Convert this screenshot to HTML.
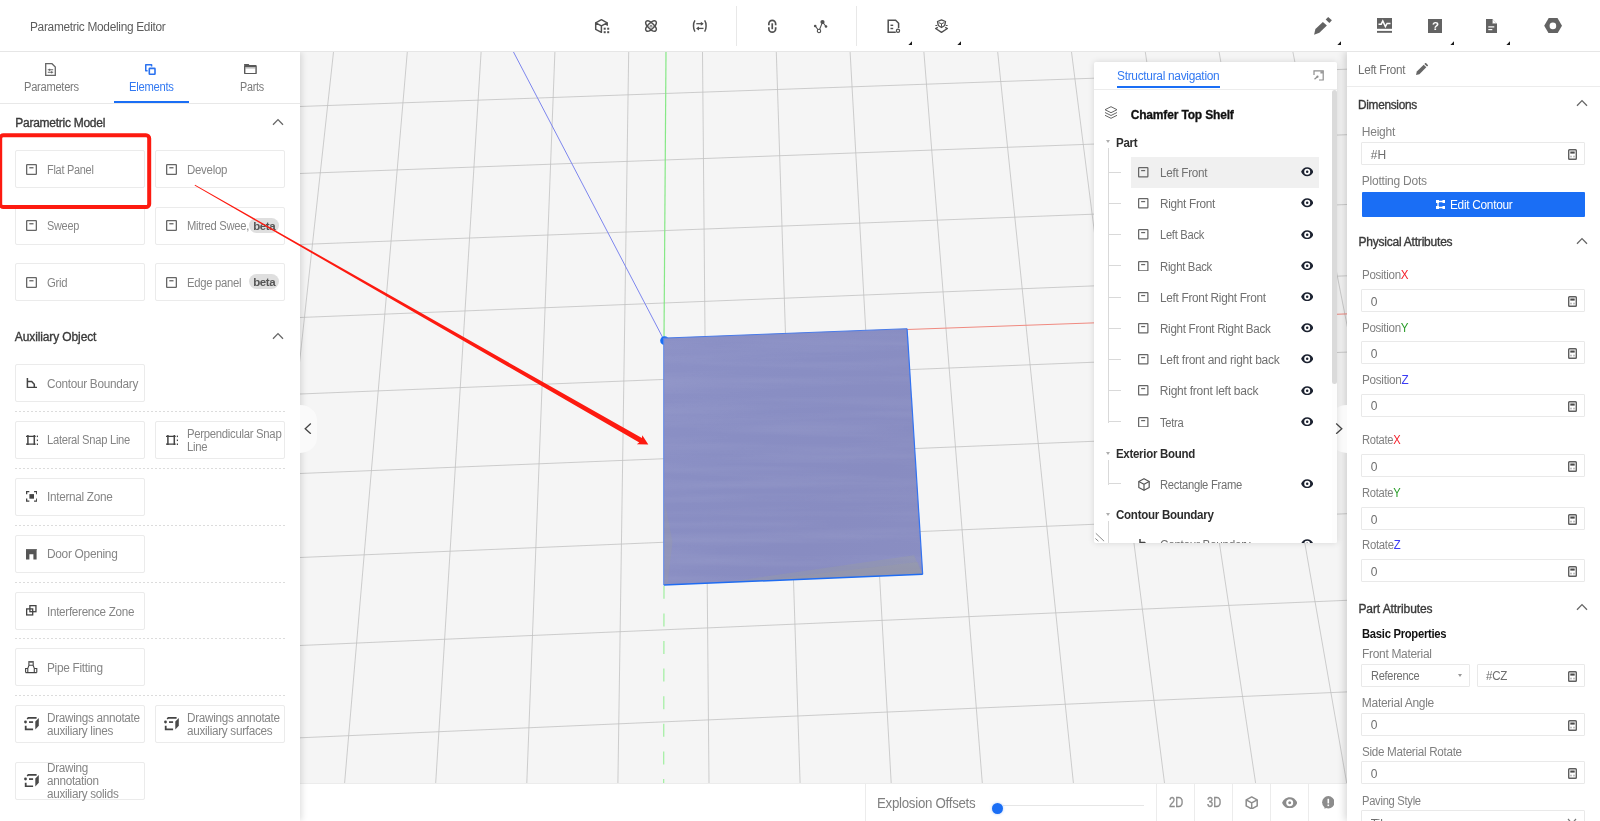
<!DOCTYPE html><html lang="en"><head><meta charset="utf-8"><title>Parametric Modeling Editor</title><style>
*{box-sizing:border-box;margin:0;padding:0}
html,body{width:1600px;height:821px;overflow:hidden;background:#fff}
body{font-family:"Liberation Sans",sans-serif;font-size:12px;color:#666;position:relative}
.abs{position:absolute}
.t{position:absolute;white-space:nowrap;line-height:14px;height:14px}
.sb{-webkit-text-stroke:.35px currentColor}
#top,#left,#right,#nav,#bottom{will-change:transform}
#top{position:absolute;left:0;top:0;width:1600px;height:52px;background:#fff;border-bottom:1px solid #e6e6e6;z-index:8}
#left{position:absolute;left:0;top:52px;width:300px;height:769px;background:#fff;z-index:4;box-shadow:2px 0 6px rgba(0,0,0,.12)}
#canvas{position:absolute;left:300px;top:52px;width:1047px;height:731px;background:#f5f5f5;overflow:hidden;z-index:1}
#right{position:absolute;left:1347px;top:52px;width:253px;height:769px;background:#fff;z-index:4;box-shadow:-2px 0 8px rgba(0,0,0,.17);overflow:hidden}
#bottom{position:absolute;left:300px;top:783px;width:1047px;height:38px;background:#fff;z-index:2;border-top:1px solid #ececec}
#nav{position:absolute;left:1094px;top:62px;width:243px;height:481px;background:#fff;z-index:6;overflow:hidden;box-shadow:0 0 6px rgba(0,0,0,.13);border-radius:2px}
.card{position:absolute;width:130px;height:38px;border:1px solid #ebebeb;border-radius:2px;background:#fff}
.card .lbl{position:absolute;left:31px;line-height:13px;color:#858585;white-space:nowrap}
.card svg{position:absolute}
.dash{position:absolute;left:15px;width:270px;height:1px;background:repeating-linear-gradient(90deg,#dcdcdc 0,#dcdcdc 2px,transparent 2px,transparent 4px)}
.inp{position:absolute;left:14.4px;width:223.8px;height:23px;border:1px solid #e9e9e9;border-radius:1px;background:#fff}
.inp .v{position:absolute;left:8.3px;top:4.7px;line-height:14px;height:14px;color:#6e6e6e;white-space:nowrap}
.inp svg{position:absolute;right:7px;top:6px}
.lab{position:absolute;left:15px;color:#808080;white-space:nowrap;line-height:14px;height:14px}
.hd{position:absolute;left:11px;color:#3a3a3a;white-space:nowrap;line-height:14px;height:14px}
.row{position:absolute;left:37px;width:188px;height:31px}
.row .rt{position:absolute;left:28.8px;top:9px;line-height:14px;height:14px;color:#707070;white-space:nowrap}
.row svg.ri{position:absolute;left:7.2px;top:10.1px}
.row svg.eye{position:absolute;left:170.1px;top:10.3px}
.grp{position:absolute;left:22.4px;color:#2c2c2c;line-height:14px;height:14px;white-space:nowrap}
.tri{position:absolute;width:0;height:0;border-left:2.4px solid transparent;border-right:2.4px solid transparent;border-top:3.6px solid #adadad}
.hl{position:absolute;left:14px;width:13px;height:0;border-top:1px solid #d9d9d9}
</style></head><body>
<div id="top">
<div class="t" style="left:30.2px;top:20px;color:#5c5c5c;letter-spacing:-0.3px;transform:scaleX(0.9895);transform-origin:0 50%;">Parametric Modeling Editor</div>
<div class="abs" style="left:736px;top:6px;width:1px;height:40px;background:#e8e8e8"></div>
<div class="abs" style="left:856px;top:6px;width:1px;height:40px;background:#e8e8e8"></div>
<svg class="abs" style="left:594px;top:19px" width="17" height="15" viewBox="0 0 17 15"><path d="M7.4 .7L13.2 3.8V6.3M7.4 .7L1.7 3.8V10.3L7.4 13.3V6.8L1.7 3.8M7.4 6.8L13.2 3.8" fill="none" stroke="#505050" stroke-width="1.5" stroke-linejoin="round" stroke-linecap="round"/><g fill="#505050"><rect x="9.7" y="8.7" width="2" height="2"/><rect x="13.2" y="8.7" width="2" height="2"/><rect x="9.7" y="12.2" width="2" height="2"/><rect x="13.2" y="12.2" width="2" height="2"/></g></svg>
<svg class="abs" style="left:644.1px;top:19px" width="14" height="14" viewBox="0 0 14 14"><g fill="none" stroke="#505050" stroke-width="1.5"><ellipse cx="7" cy="7" rx="6.7" ry="2.9" transform="rotate(45 7 7)"/><ellipse cx="7" cy="7" rx="6.7" ry="2.9" transform="rotate(-45 7 7)"/></g><circle cx="7" cy="7.2" r="1" fill="none" stroke="#505050" stroke-width=".8"/></svg>
<svg class="abs" style="left:692px;top:20px" width="16" height="12" viewBox="0 0 16 12"><g fill="none" stroke="#505050" stroke-width="1.5"><path d="M3 .4C1 3 1 9 3 11.6"/><path d="M12.6 .4C14.6 3 14.6 9 12.6 11.6"/><path d="M4.3 3.7h6.5" stroke-width="1.3"/><path d="M5 8.4h6.5" stroke-width="1.3"/></g><path d="M8.8 1.7l2.9 2L8.8 5.7z" fill="#505050"/><path d="M7 6.4L4 8.4 7 10.4z" fill="#505050"/></svg>
<svg class="abs" style="left:766.5px;top:19px" width="10.5" height="14.5" viewBox="0 0 10.5 14.5"><g fill="none" stroke="#505050" stroke-width="1.7"><path d="M1.85 6.3V4.75a3.4 3.4 0 016.8 0V6.3"/><path d="M1.85 8.2V9.75a3.4 3.4 0 006.8 0V8.2"/><path d="M5.25 4.3v5.9"/></g></svg>
<svg class="abs" style="left:813px;top:19px" width="15" height="15" viewBox="0 0 15 15"><g stroke="#505050" stroke-width="1.1" fill="none"><path d="M2.2 7L6 12L9.5 3L13 7.5"/><circle cx="6" cy="12" r="1.7" fill="#fff"/></g><circle cx="9.5" cy="3" r="2.1" fill="#505050"/><circle cx="2.2" cy="7" r="1.3" fill="#505050"/><circle cx="13" cy="7.5" r="1.3" fill="#505050"/></svg>
<svg class="abs" style="left:886.5px;top:19px" width="14" height="15" viewBox="0 0 14 15"><g fill="none" stroke="#505050" stroke-width="1.5"><path d="M11.6 9V4.2L8.6 1.2H1.2V13.3H8.8"/><circle cx="11" cy="11.7" r="1.6" stroke-width="1.2"/></g><rect x="3.5" y="5.6" width="2.7" height="1.4" fill="#505050"/><rect x="3.5" y="8.8" width="2.7" height="1.4" fill="#505050"/></svg>
<svg class="abs" style="left:934px;top:19px" width="15" height="15" viewBox="0 0 15 15"><g fill="none" stroke="#505050" stroke-width="1.3" stroke-linejoin="round"><path d="M7.5 .8L11.5 2.5L10.7 6.5L7.5 8.5L4.3 6.5L3.5 2.5z"/><path d="M4.8 3.6L7.5 4.8L10.2 3.6M7.5 4.8V7.8" stroke-width="1"/><path d="M3.8 8.3L1.6 9.5L7.5 13.3L13.4 9.5L11.2 8.3" stroke-width="1.4"/></g><path d="M1.4 6.5h1.6M12 6.5h1.6" stroke="#505050" stroke-width="1.1"/></svg>
<svg class="abs" style="left:908px;top:41px" width="4" height="4" viewBox="0 0 4 4"><path d="M4 .3V3.9H.4z" fill="#1a1a1a"/></svg>
<svg class="abs" style="left:956.9px;top:41px" width="4" height="4" viewBox="0 0 4 4"><path d="M4 .3V3.9H.4z" fill="#1a1a1a"/></svg>
<svg class="abs" style="left:1337.3px;top:41px" width="4" height="4" viewBox="0 0 4 4"><path d="M4 .3V3.9H.4z" fill="#1a1a1a"/></svg>
<svg class="abs" style="left:1449.9px;top:41px" width="4" height="4" viewBox="0 0 4 4"><path d="M4 .3V3.9H.4z" fill="#1a1a1a"/></svg>
<svg class="abs" style="left:1506.2px;top:41px" width="4" height="4" viewBox="0 0 4 4"><path d="M4 .3V3.9H.4z" fill="#1a1a1a"/></svg>
<svg class="abs" style="left:1313px;top:16px" width="20" height="20" viewBox="0 0 20 20"><path d="M1.1 18.7L2.4 13.1L9.9 5.9L13.9 9.6L6.4 16.8z" fill="#636363"/><path d="M12.7 3.4L15.2 .9L18.9 4.3L16.4 7.1z" fill="#636363"/></svg>
<svg class="abs" style="left:1377px;top:18px" width="15" height="15" viewBox="0 0 15 15"><rect x="0" y="0" width="15" height="10.8" fill="#636363"/><path d="M1.5 6.2h2.7l1.6-3.3 2.6 5.6 1.7-3.1h3.4" fill="none" stroke="#fff" stroke-width="1.5"/><rect x="0" y="12.9" width="15" height="1.9" fill="#636363"/></svg>
<svg class="abs" style="left:1427.5px;top:18.7px" width="14.8" height="14.1" viewBox="0 0 14.8 14.1"><rect x="0" y="0" width="14.8" height="14.1" fill="#636363"/><text x="7.4" y="11.3" font-family="Liberation Sans, sans-serif" font-weight="700" font-size="11.5" fill="#fff" text-anchor="middle">?</text></svg>
<svg class="abs" style="left:1485.9px;top:18.7px" width="11" height="14.1" viewBox="0 0 11 14.1"><path d="M0 0h6.3L11 4.7V14.1H0z" fill="#636363"/><path d="M6.3 0v4.7H11z" fill="#fff"/><path d="M6.3 0v4.7H11" fill="none" stroke="#636363" stroke-width=".5"/><rect x="2.3" y="7.3" width="6" height="1.2" fill="#fff"/><rect x="2.3" y="10" width="4" height="1.2" fill="#fff"/></svg>
<svg class="abs" style="left:1543.5px;top:18px" width="18.2" height="15.4" viewBox="0 0 18.2 15.4"><path d="M4.7 0h8.8l4.5 7.7-4.5 7.7H4.7L.2 7.7z" fill="#636363"/><circle cx="8.9" cy="7.9" r="3.3" fill="#fff"/></svg>
</div>
<div id="left">
<div class="abs" style="left:0;top:51px;width:300px;height:1px;background:#e8e8e8"></div>
<div class="abs" style="left:114px;top:49px;width:75px;height:2px;background:#1a6ef5"></div>
<div class="t" style="left:23.9px;top:28px;color:#7a7a7a;letter-spacing:-0.3px;transform:scaleX(0.9284);transform-origin:0 50%;">Parameters</div>
<div class="t" style="left:129.4px;top:28px;color:#3279f2;letter-spacing:-0.3px;transform:scaleX(0.9365);transform-origin:0 50%;">Elements</div>
<div class="t" style="left:239.6px;top:28px;color:#7a7a7a;letter-spacing:-0.3px;transform:scaleX(0.8978);transform-origin:0 50%;">Parts</div>
<svg class="abs" style="left:45px;top:11px" width="11" height="13" viewBox="0 0 11 13"><path d="M.7.7h6.3l3.3 3.3v8.3H.7z" fill="none" stroke="#666" stroke-width="1.3"/><path d="M2.8 6.8h5.4M2.8 9.3h5.4" stroke="#666" stroke-width="1.1"/><rect x="4" y="5.8" width="1.2" height="2" fill="#666"/><rect x="6" y="8.3" width="1.2" height="2" fill="#666"/></svg>
<svg class="abs" style="left:145.1px;top:11.8px" width="10.8" height="11" viewBox="0 0 10.8 11"><path d="M6.6 2.6V.75H.75V6.8H2.6" fill="none" stroke="#2a72f0" stroke-width="1.5" stroke-linejoin="round"/><rect x="4.3" y="4.4" width="5.7" height="5.8" rx=".5" fill="none" stroke="#2a72f0" stroke-width="1.6"/></svg>
<svg class="abs" style="left:244.3px;top:11.8px" width="12.8" height="10.4" viewBox="0 0 12.8 10.4"><rect x="1.4" y="2.6" width="10" height="2" fill="#bdbdbd"/><path d="M.7 1.8V.6H4.4L5.2 1.8" fill="none" stroke="#595959" stroke-width="1.2"/><rect x=".7" y="1.8" width="11.4" height="7.9" rx=".6" fill="none" stroke="#595959" stroke-width="1.4"/><path d="M.7 2.3H12.1" stroke="#595959" stroke-width="1.4"/></svg>
<div class="t sb" style="left:15.3px;top:64px;color:#3a3a3a;letter-spacing:-0.265px;">Parametric Model</div>
<svg class="abs" style="left:272px;top:66px" width="12" height="8" viewBox="0 0 12 8"><path d="M1 6.8L6 1.6L11 6.8" fill="none" stroke="#666" stroke-width="1.3"/></svg>
<div class="t sb" style="left:14.8px;top:278px;color:#3a3a3a;letter-spacing:-0.116px;">Auxiliary Object</div>
<svg class="abs" style="left:272px;top:280px" width="12" height="8" viewBox="0 0 12 8"><path d="M1 6.8L6 1.6L11 6.8" fill="none" stroke="#666" stroke-width="1.3"/></svg>
<div class="card" style="left:15px;top:98.3px"><svg style="left:10.2px;top:12.6px"  width="11" height="11" viewBox="0 0 11 11"><rect x="0.65" y="0.65" width="9.7" height="9.7" rx="0.6" fill="none" stroke="#666" stroke-width="1.3"/><rect x="3.3" y="3.1" width="4.2" height="1.3" fill="#666"/></svg><div class="lbl" style="top:12.7px;letter-spacing:-0.3px;transform:scaleX(0.9132);transform-origin:0 50%;">Flat Panel</div></div>
<div class="card" style="left:155px;top:98.3px"><svg style="left:10.2px;top:12.6px"  width="11" height="11" viewBox="0 0 11 11"><rect x="0.65" y="0.65" width="9.7" height="9.7" rx="0.6" fill="none" stroke="#666" stroke-width="1.3"/><rect x="3.3" y="3.1" width="4.2" height="1.3" fill="#666"/></svg><div class="lbl" style="top:12.7px;letter-spacing:-0.3px;transform:scaleX(0.9564);transform-origin:0 50%;">Develop</div></div>
<div class="card" style="left:15px;top:154.7px"><svg style="left:10.2px;top:12.6px"  width="11" height="11" viewBox="0 0 11 11"><rect x="0.65" y="0.65" width="9.7" height="9.7" rx="0.6" fill="none" stroke="#666" stroke-width="1.3"/><rect x="3.3" y="3.1" width="4.2" height="1.3" fill="#666"/></svg><div class="lbl" style="top:12.3px;letter-spacing:-0.3px;transform:scaleX(0.9093);transform-origin:0 50%;">Sweep</div></div>
<div class="card" style="left:155px;top:154.7px"><svg style="left:10.2px;top:12.6px"  width="11" height="11" viewBox="0 0 11 11"><rect x="0.65" y="0.65" width="9.7" height="9.7" rx="0.6" fill="none" stroke="#666" stroke-width="1.3"/><rect x="3.3" y="3.1" width="4.2" height="1.3" fill="#666"/></svg><div class="lbl" style="top:12.3px;letter-spacing:-0.3px;transform:scaleX(0.9333);transform-origin:0 50%;">Mitred Swee,</div><span class="abs" style="left:93.4px;top:10.2px;width:29.7px;height:15.2px;line-height:16.4px;text-align:center;border-radius:7.6px;background:#dfdfdf;color:#555;font-weight:700;font-size:11.5px;letter-spacing:-.45px">beta</span></div>
<div class="card" style="left:15px;top:211px"><svg style="left:10.2px;top:12.6px"  width="11" height="11" viewBox="0 0 11 11"><rect x="0.65" y="0.65" width="9.7" height="9.7" rx="0.6" fill="none" stroke="#666" stroke-width="1.3"/><rect x="3.3" y="3.1" width="4.2" height="1.3" fill="#666"/></svg><div class="lbl" style="top:13px;letter-spacing:-0.3px;transform:scaleX(0.9455);transform-origin:0 50%;">Grid</div></div>
<div class="card" style="left:155px;top:211px"><svg style="left:10.2px;top:12.6px"  width="11" height="11" viewBox="0 0 11 11"><rect x="0.65" y="0.65" width="9.7" height="9.7" rx="0.6" fill="none" stroke="#666" stroke-width="1.3"/><rect x="3.3" y="3.1" width="4.2" height="1.3" fill="#666"/></svg><div class="lbl" style="top:13px;letter-spacing:-0.3px;transform:scaleX(0.939);transform-origin:0 50%;">Edge panel</div><span class="abs" style="left:93.4px;top:10.2px;width:29.7px;height:15.2px;line-height:16.4px;text-align:center;border-radius:7.6px;background:#dfdfdf;color:#555;font-weight:700;font-size:11.5px;letter-spacing:-.45px">beta</span></div>
<div class="card" style="left:15px;top:311.8px"><svg style="left:9.7px;top:13.2px" width="11" height="10.5" viewBox="0 0 11 10.5"><path d="M1.4 0v9.4h9.6M1.4 3.4h4.3l2.6 2.9v3.1" fill="none" stroke="#444" stroke-width="1.5"/></svg><div class="lbl" style="top:13.2px;letter-spacing:-0.3px;transform:scaleX(0.9827);transform-origin:0 50%;">Contour Boundary</div></div>
<div class="dash" style="top:359.1px"></div>
<div class="card" style="left:15px;top:368.7px"><svg style="left:9.5px;top:13px" width="12.4" height="10.6" viewBox="0 0 12.4 10.6"><g stroke="#444" fill="none"><path d="M1.9 0v10.6M8.3 0v10.6" stroke-width="1.5"/><path d="M0 1.4h9.7M0 9.2h9.7" stroke-width="1.2"/></g><g fill="#444"><rect x="10.8" y=".6" width="1.5" height="1.5"/><rect x="10.8" y="4.55" width="1.5" height="1.5"/><rect x="10.8" y="8.5" width="1.5" height="1.5"/></g></svg><div class="lbl" style="top:12.3px;letter-spacing:-0.3px;transform:scaleX(0.9328);transform-origin:0 50%;">Lateral Snap Line</div></div>
<div class="card" style="left:155px;top:368.7px"><svg style="left:9.9px;top:13px" width="12.4" height="10.6" viewBox="0 0 12.4 10.6"><g stroke="#444" fill="none"><path d="M1.9 0v10.6M8.3 0v10.6" stroke-width="1.5"/><path d="M0 1.4h9.7M0 9.2h9.7" stroke-width="1.2"/></g><g fill="#444"><rect x="10.8" y=".6" width="1.5" height="1.5"/><rect x="10.8" y="4.55" width="1.5" height="1.5"/><rect x="10.8" y="8.5" width="1.5" height="1.5"/></g></svg><div class="lbl" style="top:6.3px;letter-spacing:-0.3px;transform:scaleX(0.9439);transform-origin:0 50%;">Perpendicular Snap<br>Line</div></div>
<div class="dash" style="top:415.8px"></div>
<div class="card" style="left:15px;top:425.6px"><svg style="left:9.8px;top:12.7px" width="11.4" height="10.8" viewBox="0 0 11.4 10.8"><g stroke="#444" stroke-width="1.3" fill="none"><path d="M.65 3.2V.65h2.7M8.05.65h2.7v2.55M10.75 7.6v2.55h-2.7M3.35 10.15H.65V7.6"/></g><rect x="3.4" y="3.1" width="4.6" height="4.6" fill="#444"/></svg><div class="lbl" style="top:12.4px;letter-spacing:-0.3px;transform:scaleX(0.9804);transform-origin:0 50%;">Internal Zone</div></div>
<div class="dash" style="top:472.7px"></div>
<div class="card" style="left:15px;top:482.6px"><svg style="left:10.2px;top:13.5px" width="10.6" height="10.6" viewBox="0 0 10.6 10.6"><path d="M0 0h10.6v10.6H7.4V5.3H3.4v5.3H0z" fill="#555"/><rect x="0" y="0" width="10.6" height="1.2" fill="#6a6a6a"/></svg><div class="lbl" style="top:12.4px;letter-spacing:-0.3px;transform:scaleX(0.9914);transform-origin:0 50%;">Door Opening</div></div>
<div class="dash" style="top:529.5px"></div>
<div class="card" style="left:15px;top:539.9px"><svg style="left:10.2px;top:12.6px" width="10.6" height="10.6" viewBox="0 0 10.6 10.6"><g stroke="#444" stroke-width="1.3" fill="none"><rect x="3.9" y=".65" width="6.05" height="6.05"/><rect x=".65" y="3.9" width="6.05" height="6.05"/></g></svg><div class="lbl" style="top:13.1px;letter-spacing:-0.3px;transform:scaleX(0.9729);transform-origin:0 50%;">Interference Zone</div></div>
<div class="dash" style="top:586.3px"></div>
<div class="card" style="left:15px;top:596.3px"><svg style="left:9.4px;top:12px" width="12.4" height="12.4" viewBox="0 0 12.4 12.4"><g stroke="#444" stroke-width="1.1" fill="none"><path d="M3.3 .9H8.8" stroke-width="1.5"/><path d="M3.9 1.6V4.3H8.2V1.6M3.9 4.5L2.8 7.4M8.2 4.5L9.3 7.4M2.8 7.4V11.6M9.3 7.4V11.6M.6 11.6H11.8M2.8 7.5H.6V11.6M9.3 7.5H11.8V11.6"/></g></svg><div class="lbl" style="top:12.7px;letter-spacing:-0.3px;transform:scaleX(0.987);transform-origin:0 50%;">Pipe Fitting</div></div>
<div class="dash" style="top:643.2px"></div>
<div class="card" style="left:15px;top:653.2px"><svg style="left:8px;top:11.3px" width="15" height="13.4" viewBox="0 0 15 13.4"><g stroke="#444" fill="none"><path d="M3.2 2L4.3 .9H12.6" stroke-width="1.6"/><path d="M5 5.1H9.1" stroke-width="1.7"/><path d="M1.7 8.8V12.4H9.1" stroke-width="1.8"/></g><circle cx="1.5" cy="5" r="1.4" fill="#444"/><path d="M11.3 4.4L14.8 .9V8.8L11.3 12.4z" fill="#4a4a4a"/></svg><div class="lbl" style="top:5.8px;letter-spacing:-0.3px;transform:scaleX(0.9772);transform-origin:0 50%;">Drawings annotate<br>auxiliary lines</div></div>
<div class="card" style="left:155px;top:653.2px"><svg style="left:8px;top:11.3px" width="15" height="13.4" viewBox="0 0 15 13.4"><g stroke="#444" fill="none"><path d="M3.2 2L4.3 .9H12.6" stroke-width="1.6"/><path d="M5 5.1H9.1" stroke-width="1.7"/><path d="M1.7 8.8V12.4H9.1" stroke-width="1.8"/></g><circle cx="1.5" cy="5" r="1.4" fill="#444"/><path d="M11.3 4.4L14.8 .9V8.8L11.3 12.4z" fill="#4a4a4a"/></svg><div class="lbl" style="top:5.8px;letter-spacing:-0.3px;transform:scaleX(0.9772);transform-origin:0 50%;">Drawings annotate<br>auxiliary surfaces</div></div>
<div class="card" style="left:15px;top:709.7px"><svg style="left:8px;top:11.3px" width="15" height="13.4" viewBox="0 0 15 13.4"><g stroke="#444" fill="none"><path d="M3.2 2L4.3 .9H12.6" stroke-width="1.6"/><path d="M5 5.1H9.1" stroke-width="1.7"/><path d="M1.7 8.8V12.4H9.1" stroke-width="1.8"/></g><circle cx="1.5" cy="5" r="1.4" fill="#444"/><path d="M11.3 4.4L14.8 .9V8.8L11.3 12.4z" fill="#4a4a4a"/></svg><div class="lbl" style="top:-0.7px;letter-spacing:-0.3px;transform:scaleX(0.9757);transform-origin:0 50%;">Drawing<br>annotation<br>auxiliary solids</div></div>
</div>
<div id="canvas"><svg width="1047" height="731" viewBox="300 52 1047 731" style="position:absolute;left:0;top:0">
<g stroke="#c2c2c2" stroke-width=".8" fill="none">
<line x1="259.7" y1="52" x2="162.4" y2="783"/>
<line x1="333.5" y1="52" x2="253.5" y2="783"/>
<line x1="407.3" y1="52" x2="344.6" y2="783"/>
<line x1="481.1" y1="52" x2="435.7" y2="783"/>
<line x1="554.9" y1="52" x2="526.8" y2="783"/>
<line x1="628.7" y1="52" x2="617.9" y2="783"/>
<line x1="702.5" y1="52" x2="709" y2="783"/>
<line x1="776.3" y1="52" x2="800.1" y2="783"/>
<line x1="850.1" y1="52" x2="891.2" y2="783"/>
<line x1="923.9" y1="52" x2="982.3" y2="783"/>
<line x1="997.7" y1="52" x2="1073.4" y2="783"/>
<line x1="1071.5" y1="52" x2="1164.5" y2="783"/>
<line x1="1145.3" y1="52" x2="1255.6" y2="783"/>
<line x1="1219.1" y1="52" x2="1346.7" y2="783"/>
<line x1="1292.9" y1="52" x2="1437.8" y2="783"/>
<line x1="1366.7" y1="52" x2="1528.9" y2="783"/>
<line x1="300" y1="106.5" x2="1347" y2="69.2"/>
<line x1="300" y1="173.5" x2="1347" y2="134.7"/>
<line x1="300" y1="244.5" x2="1347" y2="204.5"/>
<line x1="300" y1="317.5" x2="1347" y2="275.8"/>
<line x1="300" y1="394" x2="1347" y2="352.1"/>
<line x1="300" y1="473.5" x2="1347" y2="431"/>
<line x1="300" y1="557.5" x2="1347" y2="513.7"/>
<line x1="300" y1="645.5" x2="1347" y2="600.3"/>
<line x1="300" y1="737.8" x2="1347" y2="691.9"/>
</g>
<line x1="513.5" y1="52" x2="664" y2="340" stroke="#7d86ee" stroke-width="1"/>
<line x1="666" y1="52" x2="664" y2="340" stroke="#86e886" stroke-width="1.2"/>
<line x1="664" y1="585.8" x2="663.7" y2="783" stroke="#98ee98" stroke-width="1.1" stroke-dasharray="13 14.6"/>
<line x1="907" y1="329.5" x2="1347" y2="313.9" stroke="#f08a80" stroke-width="1"/>
<defs><linearGradient id="wood" x1="0" y1="0" x2="1" y2="1"><stop offset="0" stop-color="#8c91c6"/><stop offset=".35" stop-color="#898ec3"/><stop offset=".7" stop-color="#888cc1"/><stop offset="1" stop-color="#8a8ec2"/></linearGradient>
<filter id="grain" x="0" y="0" width="100%" height="100%"><feTurbulence type="fractalNoise" baseFrequency="0.004 0.09" numOctaves="3" seed="7" result="n"/><feColorMatrix in="n" type="matrix" values="0 0 0 0 0.5  0 0 0 0 0.52  0 0 0 0 0.72  0.9 0 0 0 -0.33"/><feComposite in2="SourceGraphic" operator="in"/></filter></defs>
<circle cx="664.6" cy="340.7" r="4.4" fill="#1a6ef5"/>
<path d="M663.8 338.1L907.1 328.7L922.7 574.3L663.8 585z" fill="url(#wood)"/>
<path d="M663.8 338.1L907.1 328.7L922.7 574.3L663.8 585z" fill="#fff" filter="url(#grain)" opacity=".32"/>
<path d="M721 583L914 555.3L922.5 574.3z" fill="#a5a78f" opacity=".24"/>
<path d="M760 580.5L918 562L922.5 574.3z" fill="#a5a78f" opacity=".18"/>
<path d="M664 497L672.5 542L667.5 584.5L664 585z" fill="#a5a78f" opacity=".2"/>
<path d="M907.1 328.7L922.7 574.3" fill="none" stroke="#3273f2" stroke-width="1.2"/>
<path d="M922.7 574.3L663.8 585" fill="none" stroke="#1f6cf2" stroke-width="1.5"/>
<path d="M663.8 338.1L907.1 328.7" fill="none" stroke="#4a7be8" stroke-width="1"/>
<path d="M663.7 338.1V585" fill="none" stroke="#5f8aea" stroke-width="1"/>
</svg>
</div>
<div class="abs" style="left:300px;top:404.5px;width:16.8px;height:48px;background:#fafafa;border-radius:0 17px 17px 0/0 15px 15px 0;z-index:5"></div>
<svg class="abs" style="left:303.7px;top:422.6px;z-index:6" width="8" height="11.4" viewBox="0 0 8 11.4"><path d="M6.8 .6L1.2 5.7l5.6 5.1" fill="none" stroke="#444" stroke-width="1.3"/></svg>
<div class="abs" style="left:1330.2px;top:404.5px;width:16.8px;height:48px;background:#fafafa;border-radius:17px 0 0 17px/15px 0 0 15px;z-index:5"></div>
<div id="nav">
<div class="abs" style="left:0;top:27px;width:243px;height:1px;background:#ececec"></div>
<div class="t" style="left:23px;top:6.5px;color:#3279f2;letter-spacing:-0.3px;transform:scaleX(0.9932);transform-origin:0 50%;">Structural navigation</div>
<div class="abs" style="left:23px;top:24.2px;width:102.5px;height:2px;background:#1a6ef5"></div>
<svg class="abs" style="left:219px;top:7.5px" width="11.5" height="11.5" viewBox="0 0 11.5 11.5"><g fill="none" stroke="#8e8e8e" stroke-width="1.2"><path d="M1 5V.9H10.2V10H6"/><path d="M1.5 9.2L4.4 6.8" stroke-width="1.3"/></g><rect x="7.4" y="1.2" width="2.8" height="2.3" fill="#9a9a9a"/><circle cx="4.5" cy="6.7" r="1.1" fill="#8e8e8e"/></svg>
<div class="abs" style="left:238.3px;top:28px;width:4.7px;height:453px;background:#fdfdfd"></div>
<div class="abs" style="left:238.3px;top:28px;width:4.7px;height:293.5px;background:#dadada;border-radius:3px"></div>
<svg class="abs" style="left:10px;top:44px" width="14" height="13" viewBox="0 0 14 13"><g fill="none" stroke="#666" stroke-width="1" stroke-linejoin="round"><path d="M7 .7L13 3.7 7 6.7 1 3.7z"/><path d="M1 6.5l6 3 6-3"/><path d="M1 9.3l6 3 6-3"/></g></svg>
<div class="t" style="left:36.7px;top:45.5px;color:#111;font-weight:700;letter-spacing:-0.164px;-webkit-text-stroke:.3px #111;">Chamfer Top Shelf</div>
<div class="abs" style="left:14px;top:86px;width:1px;height:275px;background:#d9d9d9"></div>
<div class="abs" style="left:14px;top:397.5px;width:1px;height:25.5px;background:#d9d9d9"></div>
<div class="abs" style="left:14px;top:458.5px;width:1px;height:30px;background:#d9d9d9"></div>
<div class="tri" style="left:12.4px;top:78.3px"></div>
<div class="t" style="left:22.4px;top:73.5px;color:#2c2c2c;font-weight:700;letter-spacing:-0.3px;transform:scaleX(0.9619);transform-origin:0 50%;">Part</div>
<div class="hl" style="top:109.8px"></div>
<div class="row" style="top:95px;background:#f0f0f0;"><svg class="ri" width="10.5" height="10.5" viewBox="0 0 11 11"><rect x="0.65" y="0.65" width="9.7" height="9.7" rx="0.6" fill="none" stroke="#666" stroke-width="1.3"/><rect x="3.3" y="3.1" width="4.2" height="1.3" fill="#666"/></svg><div class="rt" style="letter-spacing:-0.3px;transform:scaleX(0.9761);transform-origin:0 50%;">Left Front</div><svg class="eye" width="12.4" height="9.4" viewBox="0 0 12.4 9.4"><path d="M6.2 .2C3.4 .2 1.1 2 .1 4.7c1 2.7 3.3 4.5 6.1 4.5s5.1-1.8 6.1-4.5C11.3 2 9 .2 6.2 .2z" fill="#1c2230"/><circle cx="6.2" cy="4.7" r="3" fill="#fff"/><circle cx="6.2" cy="4.7" r="1.25" fill="#1c2230"/></svg></div>
<div class="hl" style="top:141px"></div>
<div class="row" style="top:126.2px;"><svg class="ri" width="10.5" height="10.5" viewBox="0 0 11 11"><rect x="0.65" y="0.65" width="9.7" height="9.7" rx="0.6" fill="none" stroke="#666" stroke-width="1.3"/><rect x="3.3" y="3.1" width="4.2" height="1.3" fill="#666"/></svg><div class="rt" style="letter-spacing:-0.3px;transform:scaleX(0.9829);transform-origin:0 50%;">Right Front</div><svg class="eye" width="12.4" height="9.4" viewBox="0 0 12.4 9.4"><path d="M6.2 .2C3.4 .2 1.1 2 .1 4.7c1 2.7 3.3 4.5 6.1 4.5s5.1-1.8 6.1-4.5C11.3 2 9 .2 6.2 .2z" fill="#1c2230"/><circle cx="6.2" cy="4.7" r="3" fill="#fff"/><circle cx="6.2" cy="4.7" r="1.25" fill="#1c2230"/></svg></div>
<div class="hl" style="top:172.2px"></div>
<div class="row" style="top:157.4px;"><svg class="ri" width="10.5" height="10.5" viewBox="0 0 11 11"><rect x="0.65" y="0.65" width="9.7" height="9.7" rx="0.6" fill="none" stroke="#666" stroke-width="1.3"/><rect x="3.3" y="3.1" width="4.2" height="1.3" fill="#666"/></svg><div class="rt" style="letter-spacing:-0.3px;transform:scaleX(0.9297);transform-origin:0 50%;">Left Back</div><svg class="eye" width="12.4" height="9.4" viewBox="0 0 12.4 9.4"><path d="M6.2 .2C3.4 .2 1.1 2 .1 4.7c1 2.7 3.3 4.5 6.1 4.5s5.1-1.8 6.1-4.5C11.3 2 9 .2 6.2 .2z" fill="#1c2230"/><circle cx="6.2" cy="4.7" r="3" fill="#fff"/><circle cx="6.2" cy="4.7" r="1.25" fill="#1c2230"/></svg></div>
<div class="hl" style="top:203.4px"></div>
<div class="row" style="top:188.6px;"><svg class="ri" width="10.5" height="10.5" viewBox="0 0 11 11"><rect x="0.65" y="0.65" width="9.7" height="9.7" rx="0.6" fill="none" stroke="#666" stroke-width="1.3"/><rect x="3.3" y="3.1" width="4.2" height="1.3" fill="#666"/></svg><div class="rt" style="letter-spacing:-0.3px;transform:scaleX(0.9432);transform-origin:0 50%;">Right Back</div><svg class="eye" width="12.4" height="9.4" viewBox="0 0 12.4 9.4"><path d="M6.2 .2C3.4 .2 1.1 2 .1 4.7c1 2.7 3.3 4.5 6.1 4.5s5.1-1.8 6.1-4.5C11.3 2 9 .2 6.2 .2z" fill="#1c2230"/><circle cx="6.2" cy="4.7" r="3" fill="#fff"/><circle cx="6.2" cy="4.7" r="1.25" fill="#1c2230"/></svg></div>
<div class="hl" style="top:234.6px"></div>
<div class="row" style="top:219.8px;"><svg class="ri" width="10.5" height="10.5" viewBox="0 0 11 11"><rect x="0.65" y="0.65" width="9.7" height="9.7" rx="0.6" fill="none" stroke="#666" stroke-width="1.3"/><rect x="3.3" y="3.1" width="4.2" height="1.3" fill="#666"/></svg><div class="rt" style="letter-spacing:-0.3px;transform:scaleX(0.9847);transform-origin:0 50%;">Left Front Right Front</div><svg class="eye" width="12.4" height="9.4" viewBox="0 0 12.4 9.4"><path d="M6.2 .2C3.4 .2 1.1 2 .1 4.7c1 2.7 3.3 4.5 6.1 4.5s5.1-1.8 6.1-4.5C11.3 2 9 .2 6.2 .2z" fill="#1c2230"/><circle cx="6.2" cy="4.7" r="3" fill="#fff"/><circle cx="6.2" cy="4.7" r="1.25" fill="#1c2230"/></svg></div>
<div class="hl" style="top:265.8px"></div>
<div class="row" style="top:251px;"><svg class="ri" width="10.5" height="10.5" viewBox="0 0 11 11"><rect x="0.65" y="0.65" width="9.7" height="9.7" rx="0.6" fill="none" stroke="#666" stroke-width="1.3"/><rect x="3.3" y="3.1" width="4.2" height="1.3" fill="#666"/></svg><div class="rt" style="letter-spacing:-0.3px;transform:scaleX(0.9683);transform-origin:0 50%;">Right Front Right Back</div><svg class="eye" width="12.4" height="9.4" viewBox="0 0 12.4 9.4"><path d="M6.2 .2C3.4 .2 1.1 2 .1 4.7c1 2.7 3.3 4.5 6.1 4.5s5.1-1.8 6.1-4.5C11.3 2 9 .2 6.2 .2z" fill="#1c2230"/><circle cx="6.2" cy="4.7" r="3" fill="#fff"/><circle cx="6.2" cy="4.7" r="1.25" fill="#1c2230"/></svg></div>
<div class="hl" style="top:297px"></div>
<div class="row" style="top:282.2px;"><svg class="ri" width="10.5" height="10.5" viewBox="0 0 11 11"><rect x="0.65" y="0.65" width="9.7" height="9.7" rx="0.6" fill="none" stroke="#666" stroke-width="1.3"/><rect x="3.3" y="3.1" width="4.2" height="1.3" fill="#666"/></svg><div class="rt" style="letter-spacing:-0.255px;">Left front and right back</div><svg class="eye" width="12.4" height="9.4" viewBox="0 0 12.4 9.4"><path d="M6.2 .2C3.4 .2 1.1 2 .1 4.7c1 2.7 3.3 4.5 6.1 4.5s5.1-1.8 6.1-4.5C11.3 2 9 .2 6.2 .2z" fill="#1c2230"/><circle cx="6.2" cy="4.7" r="3" fill="#fff"/><circle cx="6.2" cy="4.7" r="1.25" fill="#1c2230"/></svg></div>
<div class="hl" style="top:328.2px"></div>
<div class="row" style="top:313.4px;"><svg class="ri" width="10.5" height="10.5" viewBox="0 0 11 11"><rect x="0.65" y="0.65" width="9.7" height="9.7" rx="0.6" fill="none" stroke="#666" stroke-width="1.3"/><rect x="3.3" y="3.1" width="4.2" height="1.3" fill="#666"/></svg><div class="rt" style="letter-spacing:-0.233px;">Right front left back</div><svg class="eye" width="12.4" height="9.4" viewBox="0 0 12.4 9.4"><path d="M6.2 .2C3.4 .2 1.1 2 .1 4.7c1 2.7 3.3 4.5 6.1 4.5s5.1-1.8 6.1-4.5C11.3 2 9 .2 6.2 .2z" fill="#1c2230"/><circle cx="6.2" cy="4.7" r="3" fill="#fff"/><circle cx="6.2" cy="4.7" r="1.25" fill="#1c2230"/></svg></div>
<div class="hl" style="top:359.4px"></div>
<div class="row" style="top:344.6px;"><svg class="ri" width="10.5" height="10.5" viewBox="0 0 11 11"><rect x="0.65" y="0.65" width="9.7" height="9.7" rx="0.6" fill="none" stroke="#666" stroke-width="1.3"/><rect x="3.3" y="3.1" width="4.2" height="1.3" fill="#666"/></svg><div class="rt" style="letter-spacing:-0.3px;transform:scaleX(0.9294);transform-origin:0 50%;">Tetra</div><svg class="eye" width="12.4" height="9.4" viewBox="0 0 12.4 9.4"><path d="M6.2 .2C3.4 .2 1.1 2 .1 4.7c1 2.7 3.3 4.5 6.1 4.5s5.1-1.8 6.1-4.5C11.3 2 9 .2 6.2 .2z" fill="#1c2230"/><circle cx="6.2" cy="4.7" r="3" fill="#fff"/><circle cx="6.2" cy="4.7" r="1.25" fill="#1c2230"/></svg></div>
<div class="tri" style="left:12.4px;top:389.8px"></div>
<div class="t" style="left:22.4px;top:384.5px;color:#2c2c2c;font-weight:700;letter-spacing:-0.3px;transform:scaleX(0.9567);transform-origin:0 50%;">Exterior Bound</div>
<div class="hl" style="top:421.3px"></div>
<div class="row" style="top:406.5px"><svg class="ri" width="12" height="13" viewBox="0 0 12 13" style="top:9px"><g fill="none" stroke="#555" stroke-width="1.2" stroke-linejoin="round"><path d="M6 .7l5.2 2.8v6L6 12.3.8 9.5v-6z"/><path d="M.8 3.5L6 6.3l5.2-2.8M6 6.3v6"/></g></svg><div class="rt" style="letter-spacing:-0.3px;transform:scaleX(0.9367);transform-origin:0 50%;">Rectangle Frame</div><svg class="eye" width="12.4" height="9.4" viewBox="0 0 12.4 9.4"><path d="M6.2 .2C3.4 .2 1.1 2 .1 4.7c1 2.7 3.3 4.5 6.1 4.5s5.1-1.8 6.1-4.5C11.3 2 9 .2 6.2 .2z" fill="#1c2230"/><circle cx="6.2" cy="4.7" r="3" fill="#fff"/><circle cx="6.2" cy="4.7" r="1.25" fill="#1c2230"/></svg></div>
<div class="tri" style="left:12.4px;top:450.8px"></div>
<div class="t" style="left:22.4px;top:445.5px;color:#2c2c2c;font-weight:700;letter-spacing:-0.3px;transform:scaleX(0.9645);transform-origin:0 50%;">Contour Boundary</div>
<div class="hl" style="top:482px"></div>
<div class="row" style="top:467px"><svg class="ri" width="13" height="12" viewBox="0 0 13 12"><path d="M2 0v9.5h10.5M2 3.5h4.5l3 3.2v2.8" fill="none" stroke="#444" stroke-width="1.5"/></svg><div class="rt" style="letter-spacing:-0.3px;transform:scaleX(0.9763);transform-origin:0 50%;">Contour Boundary</div><svg class="eye" width="12.4" height="9.4" viewBox="0 0 12.4 9.4"><path d="M6.2 .2C3.4 .2 1.1 2 .1 4.7c1 2.7 3.3 4.5 6.1 4.5s5.1-1.8 6.1-4.5C11.3 2 9 .2 6.2 .2z" fill="#1c2230"/><circle cx="6.2" cy="4.7" r="3" fill="#fff"/><circle cx="6.2" cy="4.7" r="1.25" fill="#1c2230"/></svg></div>
<svg class="abs" style="left:1px;top:469.5px" width="10" height="10" viewBox="0 0 10 10"><path d="M.8 1.3L9.1 9.2M.4 6.5L3.4 9.2" stroke="#8a8a8a" stroke-width="1"/></svg>
</div>
<svg class="abs" style="left:1335.3px;top:422.6px;z-index:7" width="8" height="11.4" viewBox="0 0 8 11.4"><path d="M1.2 .6L6.8 5.7l-5.6 5.1" fill="none" stroke="#444" stroke-width="1.3"/></svg>
<div id="right">
<div class="t" style="left:11.4px;top:11px;color:#707070;letter-spacing:-0.3px;transform:scaleX(0.974);transform-origin:0 50%;">Left Front</div>
<svg class="abs" style="left:69px;top:11px" width="12" height="12" viewBox="0 0 12 12"><path d="M0 12l.8-3.4L7.7 1.7l2.6 2.6L3.4 11.2z" fill="#666"/><path d="M8.4 1l.9-.9a.5.5 0 01.7 0l1.9 1.9a.5.5 0 010 .7l-.9.9z" fill="#666"/></svg>
<div class="abs" style="left:0;top:34px;width:253px;height:1px;background:#ececec"></div>
<div class="t sb" style="left:11.4px;top:46px;color:#3a3a3a;letter-spacing:-0.3px;transform:scaleX(0.9867);transform-origin:0 50%;">Dimensions</div>
<svg class="abs" style="left:229px;top:47px" width="12" height="8" viewBox="0 0 12 8"><path d="M1 6.8L6 1.6L11 6.8" fill="none" stroke="#666" stroke-width="1.3"/></svg>
<div class="t" style="left:14.8px;top:73px;color:#808080;letter-spacing:-0.231px;">Height</div>
<div class="inp" style="left:14.4px;top:90.3px;width:223.8px"><div class="v" style="letter-spacing:0.23px;">#H</div><svg width="9" height="11" viewBox="0 0 9 11"><rect x="0.7" y="0.7" width="7.6" height="9.6" rx="0.8" fill="none" stroke="#5e5e5e" stroke-width="1.4"/><rect x="2.3" y="2.5" width="4.4" height="2.1" fill="#4a4a4a"/><rect x="2.3" y="6.7" width="1.4" height="1.7" fill="#a8a8a8"/><rect x="5.3" y="6.7" width="1.4" height="1.7" fill="#a8a8a8"/></svg></div>
<div class="t" style="left:14.8px;top:122px;color:#808080;letter-spacing:-0.233px;">Plotting Dots</div>
<div class="abs" style="left:15px;top:139.5px;width:223px;height:25.5px;background:#1a6ef5;border-radius:1px"></div>
<svg class="abs" style="left:89px;top:148px" width="9" height="9" viewBox="0 0 9 9"><path d="M2 1.5h5M2 7.5h5M2 1.5v6" stroke="#fff" stroke-width="1.3" fill="none"/><rect x="0" y="0" width="3" height="3" fill="#fff"/><rect x="0" y="6" width="3" height="3" fill="#fff"/><rect x="6.5" y="0" width="2.5" height="3" fill="#fff"/><rect x="6.5" y="6" width="2.5" height="3" fill="#fff"/></svg>
<div class="t" style="left:102.9px;top:145.5px;color:#fff;letter-spacing:-0.3px;transform:scaleX(0.9888);transform-origin:0 50%;">Edit Contour</div>
<div class="t sb" style="left:11.4px;top:183px;color:#3a3a3a;letter-spacing:-0.213px;">Physical Attributes</div>
<svg class="abs" style="left:229px;top:185px" width="12" height="8" viewBox="0 0 12 8"><path d="M1 6.8L6 1.6L11 6.8" fill="none" stroke="#666" stroke-width="1.3"/></svg>
<div class="lab" style="left:14.8px;top:216px;letter-spacing:-0.3px;transform:scaleX(0.9646);transform-origin:0 50%;">Position<span style="color:#f5222d">X</span></div>
<div class="inp" style="left:14.4px;top:237.3px;width:223.8px"><div class="v" style="">0</div><svg width="9" height="11" viewBox="0 0 9 11"><rect x="0.7" y="0.7" width="7.6" height="9.6" rx="0.8" fill="none" stroke="#5e5e5e" stroke-width="1.4"/><rect x="2.3" y="2.5" width="4.4" height="2.1" fill="#4a4a4a"/><rect x="2.3" y="6.7" width="1.4" height="1.7" fill="#a8a8a8"/><rect x="5.3" y="6.7" width="1.4" height="1.7" fill="#a8a8a8"/></svg></div>
<div class="lab" style="left:14.8px;top:269px;letter-spacing:-0.3px;transform:scaleX(0.9646);transform-origin:0 50%;">Position<span style="color:#2a9d2a">Y</span></div>
<div class="inp" style="left:14.4px;top:289.3px;width:223.8px"><div class="v" style="">0</div><svg width="9" height="11" viewBox="0 0 9 11"><rect x="0.7" y="0.7" width="7.6" height="9.6" rx="0.8" fill="none" stroke="#5e5e5e" stroke-width="1.4"/><rect x="2.3" y="2.5" width="4.4" height="2.1" fill="#4a4a4a"/><rect x="2.3" y="6.7" width="1.4" height="1.7" fill="#a8a8a8"/><rect x="5.3" y="6.7" width="1.4" height="1.7" fill="#a8a8a8"/></svg></div>
<div class="lab" style="left:14.8px;top:321px;letter-spacing:-0.3px;transform:scaleX(0.9784);transform-origin:0 50%;">Position<span style="color:#3b3bf5">Z</span></div>
<div class="inp" style="left:14.4px;top:341.8px;width:223.8px"><div class="v" style="">0</div><svg width="9" height="11" viewBox="0 0 9 11"><rect x="0.7" y="0.7" width="7.6" height="9.6" rx="0.8" fill="none" stroke="#5e5e5e" stroke-width="1.4"/><rect x="2.3" y="2.5" width="4.4" height="2.1" fill="#4a4a4a"/><rect x="2.3" y="6.7" width="1.4" height="1.7" fill="#a8a8a8"/><rect x="5.3" y="6.7" width="1.4" height="1.7" fill="#a8a8a8"/></svg></div>
<div class="lab" style="left:14.8px;top:381px;letter-spacing:-0.3px;transform:scaleX(0.9307);transform-origin:0 50%;">Rotate<span style="color:#f5222d">X</span></div>
<div class="inp" style="left:14.4px;top:402px;width:223.8px"><div class="v" style="">0</div><svg width="9" height="11" viewBox="0 0 9 11"><rect x="0.7" y="0.7" width="7.6" height="9.6" rx="0.8" fill="none" stroke="#5e5e5e" stroke-width="1.4"/><rect x="2.3" y="2.5" width="4.4" height="2.1" fill="#4a4a4a"/><rect x="2.3" y="6.7" width="1.4" height="1.7" fill="#a8a8a8"/><rect x="5.3" y="6.7" width="1.4" height="1.7" fill="#a8a8a8"/></svg></div>
<div class="lab" style="left:14.8px;top:433.5px;letter-spacing:-0.3px;transform:scaleX(0.9307);transform-origin:0 50%;">Rotate<span style="color:#2a9d2a">Y</span></div>
<div class="inp" style="left:14.4px;top:454.9px;width:223.8px"><div class="v" style="">0</div><svg width="9" height="11" viewBox="0 0 9 11"><rect x="0.7" y="0.7" width="7.6" height="9.6" rx="0.8" fill="none" stroke="#5e5e5e" stroke-width="1.4"/><rect x="2.3" y="2.5" width="4.4" height="2.1" fill="#4a4a4a"/><rect x="2.3" y="6.7" width="1.4" height="1.7" fill="#a8a8a8"/><rect x="5.3" y="6.7" width="1.4" height="1.7" fill="#a8a8a8"/></svg></div>
<div class="lab" style="left:14.8px;top:486px;letter-spacing:-0.3px;transform:scaleX(0.9461);transform-origin:0 50%;">Rotate<span style="color:#3b3bf5">Z</span></div>
<div class="inp" style="left:14.4px;top:507px;width:223.8px"><div class="v" style="">0</div><svg width="9" height="11" viewBox="0 0 9 11"><rect x="0.7" y="0.7" width="7.6" height="9.6" rx="0.8" fill="none" stroke="#5e5e5e" stroke-width="1.4"/><rect x="2.3" y="2.5" width="4.4" height="2.1" fill="#4a4a4a"/><rect x="2.3" y="6.7" width="1.4" height="1.7" fill="#a8a8a8"/><rect x="5.3" y="6.7" width="1.4" height="1.7" fill="#a8a8a8"/></svg></div>
<div class="t sb" style="left:11.4px;top:550px;color:#3a3a3a;letter-spacing:-0.085px;">Part Attributes</div>
<svg class="abs" style="left:229px;top:551px" width="12" height="8" viewBox="0 0 12 8"><path d="M1 6.8L6 1.6L11 6.8" fill="none" stroke="#666" stroke-width="1.3"/></svg>
<div class="t" style="left:14.9px;top:575px;color:#111;font-weight:700;letter-spacing:-0.3px;transform:scaleX(0.9376);transform-origin:0 50%;">Basic Properties</div>
<div class="t" style="left:14.8px;top:595px;color:#808080;letter-spacing:-0.3px;transform:scaleX(0.9968);transform-origin:0 50%;">Front Material</div>
<div class="inp" style="top:611.8px;width:108.5px"><div class="v" style="letter-spacing:-0.3px;transform:scaleX(0.9171);transform-origin:0 50%;">Reference</div></div>
<div class="tri" style="left:111px;top:621.5px;border-top-color:#999;border-left-width:2.5px;border-right-width:2.5px;border-top-width:3.5px"></div>
<div class="inp" style="left:129.7px;top:611.8px;width:108.5px"><div class="v" style="letter-spacing:-0.3px;transform:scaleX(0.9646);transform-origin:0 50%;">#CZ</div><svg width="9" height="11" viewBox="0 0 9 11"><rect x="0.7" y="0.7" width="7.6" height="9.6" rx="0.8" fill="none" stroke="#5e5e5e" stroke-width="1.4"/><rect x="2.3" y="2.5" width="4.4" height="2.1" fill="#4a4a4a"/><rect x="2.3" y="6.7" width="1.4" height="1.7" fill="#a8a8a8"/><rect x="5.3" y="6.7" width="1.4" height="1.7" fill="#a8a8a8"/></svg></div>
<div class="t" style="left:14.8px;top:644px;color:#808080;letter-spacing:-0.275px;">Material Angle</div>
<div class="inp" style="left:14.4px;top:660.7px;width:223.8px"><div class="v" style="">0</div><svg width="9" height="11" viewBox="0 0 9 11"><rect x="0.7" y="0.7" width="7.6" height="9.6" rx="0.8" fill="none" stroke="#5e5e5e" stroke-width="1.4"/><rect x="2.3" y="2.5" width="4.4" height="2.1" fill="#4a4a4a"/><rect x="2.3" y="6.7" width="1.4" height="1.7" fill="#a8a8a8"/><rect x="5.3" y="6.7" width="1.4" height="1.7" fill="#a8a8a8"/></svg></div>
<div class="t" style="left:14.8px;top:693px;color:#808080;letter-spacing:-0.3px;transform:scaleX(0.9715);transform-origin:0 50%;">Side Material Rotate</div>
<div class="inp" style="left:14.4px;top:709.3px;width:223.8px"><div class="v" style="">0</div><svg width="9" height="11" viewBox="0 0 9 11"><rect x="0.7" y="0.7" width="7.6" height="9.6" rx="0.8" fill="none" stroke="#5e5e5e" stroke-width="1.4"/><rect x="2.3" y="2.5" width="4.4" height="2.1" fill="#4a4a4a"/><rect x="2.3" y="6.7" width="1.4" height="1.7" fill="#a8a8a8"/><rect x="5.3" y="6.7" width="1.4" height="1.7" fill="#a8a8a8"/></svg></div>
<div class="t" style="left:14.8px;top:742px;color:#808080;letter-spacing:-0.3px;transform:scaleX(0.9318);transform-origin:0 50%;">Paving Style</div>
<div class="inp" style="top:758.2px"><div class="v" style="top:5.5px">Tile</div><svg width="10" height="7" viewBox="0 0 10 7" style="top:7.3px"><path d="M1 1l4 4.5L9 1" fill="none" stroke="#777" stroke-width="1.2"/></svg></div>
</div>
<div id="bottom">
<div class="abs" style="left:565px;top:0;width:1px;height:38px;background:#ececec"></div>
<div class="abs" style="left:856.1px;top:0;width:1px;height:38px;background:#ececec"></div>
<div class="abs" style="left:894.1px;top:0;width:1px;height:38px;background:#ececec"></div>
<div class="abs" style="left:932.1px;top:0;width:1px;height:38px;background:#ececec"></div>
<div class="abs" style="left:970.1px;top:0;width:1px;height:38px;background:#ececec"></div>
<div class="abs" style="left:1008.1px;top:0;width:1px;height:38px;background:#ececec"></div>
<div class="t" style="left:577.4px;top:11px;color:#808080;font-size:14px;letter-spacing:-0.3px;transform:scaleX(0.9499);transform-origin:0 50%;line-height:17px;height:17px;">Explosion Offsets</div>
<div class="abs" style="left:703px;top:20.5px;width:141px;height:1.5px;background:#e6e6e6"></div>
<div class="abs" style="left:692px;top:18.5px;width:11px;height:11px;border-radius:6px;background:#1a6ef5;box-shadow:0 0 3px rgba(26,110,245,.35)"></div>
<div class="t" style="left:868.9px;top:10.5px;color:#8c8c8c;font-size:13.8px;-webkit-text-stroke:.35px #8c8c8c;transform:scaleX(.8);transform-origin:left;line-height:16px;height:16px;">2D</div>
<div class="t" style="left:907.1px;top:10.5px;color:#8c8c8c;font-size:13.8px;-webkit-text-stroke:.35px #8c8c8c;transform:scaleX(.8);transform-origin:left;line-height:16px;height:16px;">3D</div>
<svg class="abs" style="left:945.2px;top:11.5px" width="13.4" height="13.8" viewBox="0 0 13.4 13.8"><g fill="none" stroke="#8c8c8c" stroke-width="1.5" stroke-linejoin="round"><path d="M6.7 .9l5.5 3v6L6.7 12.9 1.2 9.9v-6z"/><path d="M1.2 3.9l5.5 3 5.5-3M6.7 6.9v6"/></g></svg>
<svg class="abs" style="left:982px;top:12.6px" width="15.4" height="11.6" viewBox="0 0 15.4 11.6"><path d="M7.7 .2C4.2 .2 1.3 2.5.1 5.8c1.2 3.3 4.1 5.6 7.6 5.6s6.4-2.3 7.6-5.6C14.1 2.5 11.2 .2 7.7 .2z" fill="#8c8c8c"/><circle cx="7.7" cy="5.8" r="3.5" fill="#fff"/><circle cx="7.7" cy="5.8" r="1.5" fill="#8c8c8c"/></svg>
<svg class="abs" style="left:1021.8px;top:12px" width="12.6" height="13" viewBox="0 0 12.6 13"><circle cx="6.3" cy="6.3" r="6.2" fill="#8c8c8c"/><path d="M2.5 10.5l0 2.3 2.8-1.2z" fill="#8c8c8c"/><rect x="5.5" y="2.8" width="1.6" height="4.6" fill="#fff"/><rect x="5.5" y="8.5" width="1.6" height="1.6" fill="#fff"/></svg>
</div>
<svg class="abs" style="left:0;top:0;z-index:10;pointer-events:none" width="1600" height="821" viewBox="0 0 1600 821">
<rect x="0.2" y="135.2" width="149" height="71.9" rx="3.2" fill="none" stroke="#fd1a10" stroke-width="4"/>
<path d="M194.6 185.4L639.3 442.4L636.8 444.2L648.3 444.6L642.3 435.2L641.9 438L195 184.8z" fill="#fd1a10"/>
</svg>
</body></html>
